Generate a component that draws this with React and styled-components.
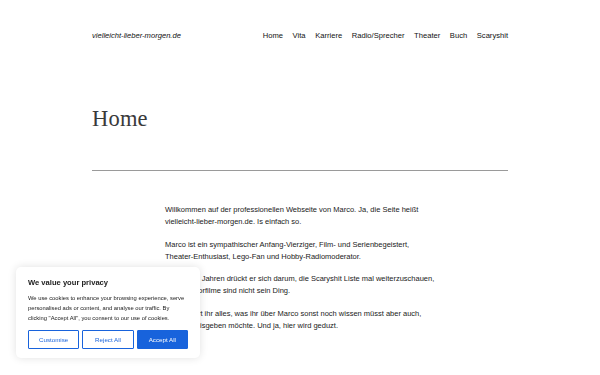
import React from 'react'
import styled, { createGlobalStyle } from 'styled-components'

const GlobalStyle = createGlobalStyle`
  html, body {
    margin: 0;
    padding: 0;
    background: #fff;
    font-family: "Liberation Sans", Arial, sans-serif;
    color: #111;
  }
`

const Page = styled.div`
  width: 416px;
  margin: 0 auto;
  min-height: 375px;
`

const Header = styled.header`
  display: flex;
  align-items: center;
  justify-content: space-between;
  height: 70px;
`

const SiteTitle = styled.a`
  font-size: 7.6px;
  font-style: italic;
  color: #111;
  text-decoration: none;
`

const Nav = styled.nav`
  display: flex;
  gap: 9.6px;
`

const NavLink = styled.a`
  font-size: 7.6px;
  color: #111;
  text-decoration: none;
`

const Title = styled.h1`
  margin: 36px 0 0;
  font-family: "Liberation Serif", "Times New Roman", serif;
  font-weight: normal;
  font-size: 22.5px;
  line-height: 26px;
  color: #3a3a3a;
  letter-spacing: 0.2px;
`

const Rule = styled.hr`
  margin: 38px 0 0;
  border: 0;
  border-top: 1px solid #9a9a9a;
`

const Content = styled.main`
  width: 270px;
  margin: 33px auto 0;
`

const Para = styled.p`
  margin: 0 0 10.5px;
  font-size: 7.5px;
  line-height: 12px;
  color: #1a1a1a;
`

const Banner = styled.div`
  position: fixed;
  left: 16px;
  bottom: 17px;
  width: 160px;
  padding: 10px 12px 9px;
  background: #fff;
  border-radius: 5px;
  box-shadow: 0 0 8px rgba(0, 0, 0, 0.12);
`

const BannerTitle = styled.h2`
  margin: 1px 0 6px;
  font-size: 7.6px;
  font-weight: bold;
  color: #212121;
`

const BannerText = styled.p`
  margin: 0 0 7px;
  font-size: 5.8px;
  line-height: 10px;
  color: #212121;
`

const Buttons = styled.div`
  display: grid;
  grid-template-columns: 1fr 1fr 1fr;
  gap: 3px;
`

const Btn = styled.button`
  height: 19px;
  padding: 0;
  font-family: inherit;
  font-size: 6.2px;
  border: 1px solid #1863dc;
  border-radius: 1px;
  color: ${p => (p.$primary ? '#fff' : '#1863dc')};
  background: ${p => (p.$primary ? '#1863dc' : '#fff')};
`

export default function App() {
  return (
    <>
      <GlobalStyle />
      <Page>
        <Header>
          <SiteTitle href="#">vielleicht-lieber-morgen.de</SiteTitle>
          <Nav>
            {['Home', 'Vita', 'Karriere', 'Radio/Sprecher', 'Theater', 'Buch', 'Scaryshit'].map(n => (
              <NavLink key={n} href="#">{n}</NavLink>
            ))}
          </Nav>
        </Header>
        <Title>Home</Title>
        <Rule />
        <Content>
          <Para>
            Willkommen auf der professionellen Webseite von Marco. Ja, die Seite heißt
            vielleicht-lieber-morgen.de. Is einfach so.
          </Para>
          <Para>
            Marco ist ein sympathischer Anfang-Vierziger, Film- und Serienbegeistert,
            Theater-Enthusiast, Lego-Fan und Hobby-Radiomoderator.
          </Para>
          <Para>
            Seit vielen Jahren drückt er sich darum, die Scaryshit Liste mal weiterzuschauen,
            denn Horrorfilme sind nicht sein Ding.
          </Para>
          <Para>
            Hier erfahrt ihr alles, was ihr über Marco sonst noch wissen müsst aber auch,
            was er preisgeben möchte. Und ja, hier wird geduzt.
          </Para>
        </Content>
      </Page>
      <Banner>
        <BannerTitle>We value your privacy</BannerTitle>
        <BannerText>
          We use cookies to enhance your browsing experience, serve personalised ads or
          content, and analyse our traffic. By clicking "Accept All", you consent to our
          use of cookies.
        </BannerText>
        <Buttons>
          <Btn>Customise</Btn>
          <Btn>Reject All</Btn>
          <Btn $primary>Accept All</Btn>
        </Buttons>
      </Banner>
    </>
  )
}
